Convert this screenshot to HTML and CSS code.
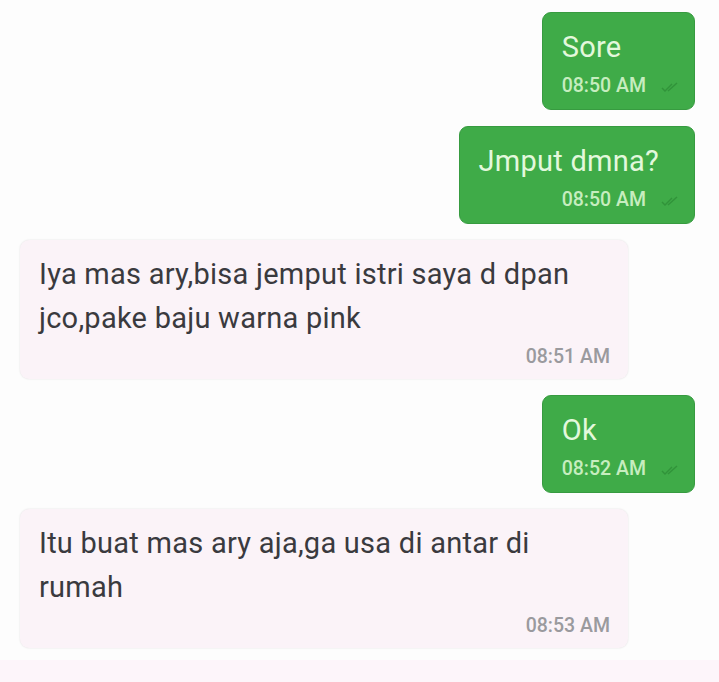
FILE: index.html
```html
<!DOCTYPE html>
<html>
<head>
<meta charset="utf-8">
<link rel="stylesheet" href="styles.css">
</head>
<body>
<div class="chat">
  <div class="msg out">
    <div class="text">Sore</div>
    <div class="meta"><span class="time">08:50 AM</span><svg class="check" width="18" height="10" viewBox="0 0 18 10"><path d="M1 6 L4 9 L11 2 M7 9 L16 1" fill="none" stroke="#2e8e37" stroke-width="1.4"/></svg></div>
  </div>
  <div class="msg out">
    <div class="text">Jmput dmna?</div>
    <div class="meta"><span class="time">08:50 AM</span><svg class="check" width="18" height="10" viewBox="0 0 18 10"><path d="M1 6 L4 9 L11 2 M7 9 L16 1" fill="none" stroke="#2e8e37" stroke-width="1.4"/></svg></div>
  </div>
  <div class="msg in">
    <div class="text">Iya mas ary,bisa jemput istri saya d dpan jco,pake baju warna pink</div>
    <div class="meta"><span class="time">08:51 AM</span></div>
  </div>
  <div class="msg out">
    <div class="text">Ok</div>
    <div class="meta"><span class="time">08:52 AM</span><svg class="check" width="18" height="10" viewBox="0 0 18 10"><path d="M1 6 L4 9 L11 2 M7 9 L16 1" fill="none" stroke="#2e8e37" stroke-width="1.4"/></svg></div>
  </div>
  <div class="msg in">
    <div class="text">Itu buat mas ary aja,ga usa di antar di rumah</div>
    <div class="meta"><span class="time">08:53 AM</span></div>
  </div>
</div>
<div class="footer"></div>
</body>
</html>
```
FILE: styles.css
```css
html, body {
  margin: 0;
  padding: 0;
  background: #fdfdfd;
  font-family: Roboto, "Liberation Sans", sans-serif;
}
.chat {
  display: flex;
  flex-direction: column;
  gap: 16px;
  padding: 12px 24px 0 20px;
}
.msg {
  padding: 12px 15px 11px 19px;
  border-radius: 9px;
  box-sizing: border-box;
}
.text {
  font-size: 29px;
  line-height: 44px;
  letter-spacing: 0.25px;
}
.meta {
  margin-top: 5px;
  display: flex;
  justify-content: flex-end;
  align-items: center;
  line-height: 24px;
}
.time {
  font-size: 19.5px;
  font-weight: 500;
}
.out {
  align-self: flex-end;
  background: #3fab48;
  border: 1px solid #379b40;
  color: #e3f8dc;
}
.out .text {
  margin-right: 20px;
}
.out .time {
  color: #c6edbf;
}
.check {
  margin-left: 15px;
  margin-top: 2px;
  opacity: 0.8;
}
.in {
  align-self: flex-start;
  width: 608px;
  background: #fbf3f8;
  box-shadow: 0 0 2px rgba(0,0,0,0.12);
  color: #3a3a3e;
  padding-right: 18px;
  padding-bottom: 10px;
}
.in .text {
  margin-right: 20px;
}
.in .time {
  color: #9a9a9e;
}
.footer {
  margin-top: 12px;
  height: 40px;
  background: #fdf5fa;
}
```
